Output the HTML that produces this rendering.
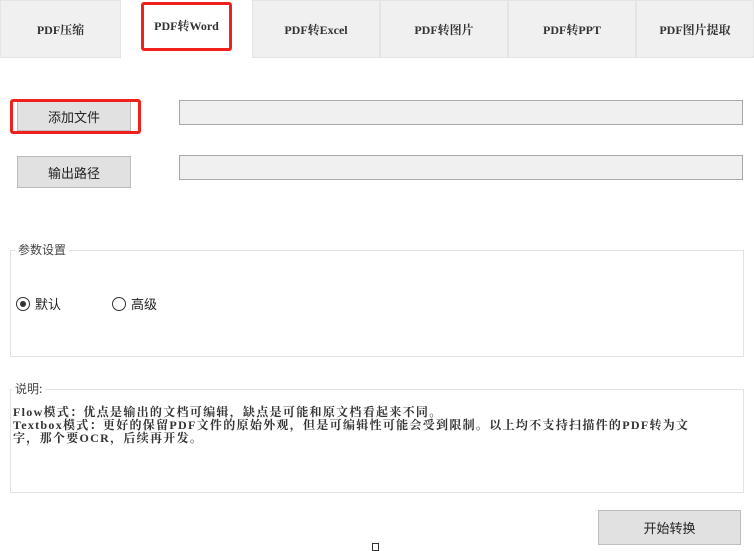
<!DOCTYPE html>
<html><head><meta charset="utf-8"><style>
*{margin:0;padding:0;box-sizing:border-box}
body{width:754px;height:549px;background:#fff;position:relative;overflow:hidden;font-family:"Liberation Serif","Noto Serif CJK SC",serif;color:#222}
.a{position:absolute}
.tab{position:absolute;top:0;height:58px;background:#f0f0f0;border:1px solid #e4e4e4;font-size:12px;font-weight:bold;display:flex;align-items:center;justify-content:center;color:#333}
.btn{position:absolute;background:#e1e1e1;border:1px solid #bdbdbd;font-size:13px;display:flex;align-items:center;justify-content:center;font-family:"Noto Sans CJK SC",sans-serif;color:#222}
.tb{position:absolute;left:179px;width:564px;height:25px;background:#f0f0f0;border:1px solid #a8a8a8}
.grp{position:absolute;left:10px;width:734px;border:1px solid #e2e2e2}
.lbl{position:absolute;background:#fff;font-size:12px;font-family:"Noto Sans CJK SC",sans-serif;color:#444;padding:0 3px}
.red{position:absolute;border:3px solid #f0201c;border-radius:3px}
</style></head><body>
<div class="tab" style="left:0;width:121px">PDF压缩</div>
<div class="a" style="left:121px;top:0;width:131px;height:58px;background:#fff;font-size:12px;font-weight:bold;display:flex;align-items:center;justify-content:center;color:#333;padding-bottom:8px">PDF转Word</div>
<div class="red" style="left:141px;top:2px;width:91px;height:49px"></div>
<div class="tab" style="left:252px;width:128px">PDF转Excel</div>
<div class="tab" style="left:380px;width:128px">PDF转图片</div>
<div class="tab" style="left:508px;width:128px">PDF转PPT</div>
<div class="tab" style="left:636px;width:118px">PDF图片提取</div>

<div class="btn" style="left:17px;top:101px;width:114px;height:30px">添加文件</div>
<div class="red" style="left:10px;top:99px;width:131px;height:35px"></div>
<div class="tb" style="top:100px"></div>
<div class="btn" style="left:17px;top:156px;width:114px;height:32px">输出路径</div>
<div class="tb" style="top:155px"></div>

<div class="grp" style="top:250px;height:107px"></div>
<div class="lbl" style="left:15px;top:241px">参数设置</div>
<div class="a" style="left:16px;top:297px;width:14px;height:14px;border:1px solid #333;border-radius:50%"><div class="a" style="left:3px;top:3px;width:6px;height:6px;background:#333;border-radius:50%"></div></div>
<div class="a" style="left:35px;top:294px;font-size:13px;font-family:'Noto Sans CJK SC',sans-serif">默认</div>
<div class="a" style="left:112px;top:297px;width:14px;height:14px;border:1px solid #333;border-radius:50%"></div>
<div class="a" style="left:131px;top:294px;font-size:13px;font-family:'Noto Sans CJK SC',sans-serif">高级</div>

<div class="grp" style="top:389px;height:104px"></div>
<div class="lbl" style="left:12px;top:380px">说明:</div>
<div class="a" style="left:13px;top:406px;white-space:nowrap;font-size:12px;letter-spacing:1.3px;line-height:13px;font-weight:bold;color:#333">Flow模式：优点是输出的文档可编辑，缺点是可能和原文档看起来不同。<br>Textbox模式：更好的保留PDF文件的原始外观，但是可编辑性可能会受到限制。以上均不支持扫描件的PDF转为文<br>字，那个要OCR，后续再开发。</div>

<div class="btn" style="left:598px;top:510px;width:143px;height:35px">开始转换</div>
<div class="a" style="left:372px;top:543px;width:7px;height:8px;border:1px solid #333"></div>
</body></html>
